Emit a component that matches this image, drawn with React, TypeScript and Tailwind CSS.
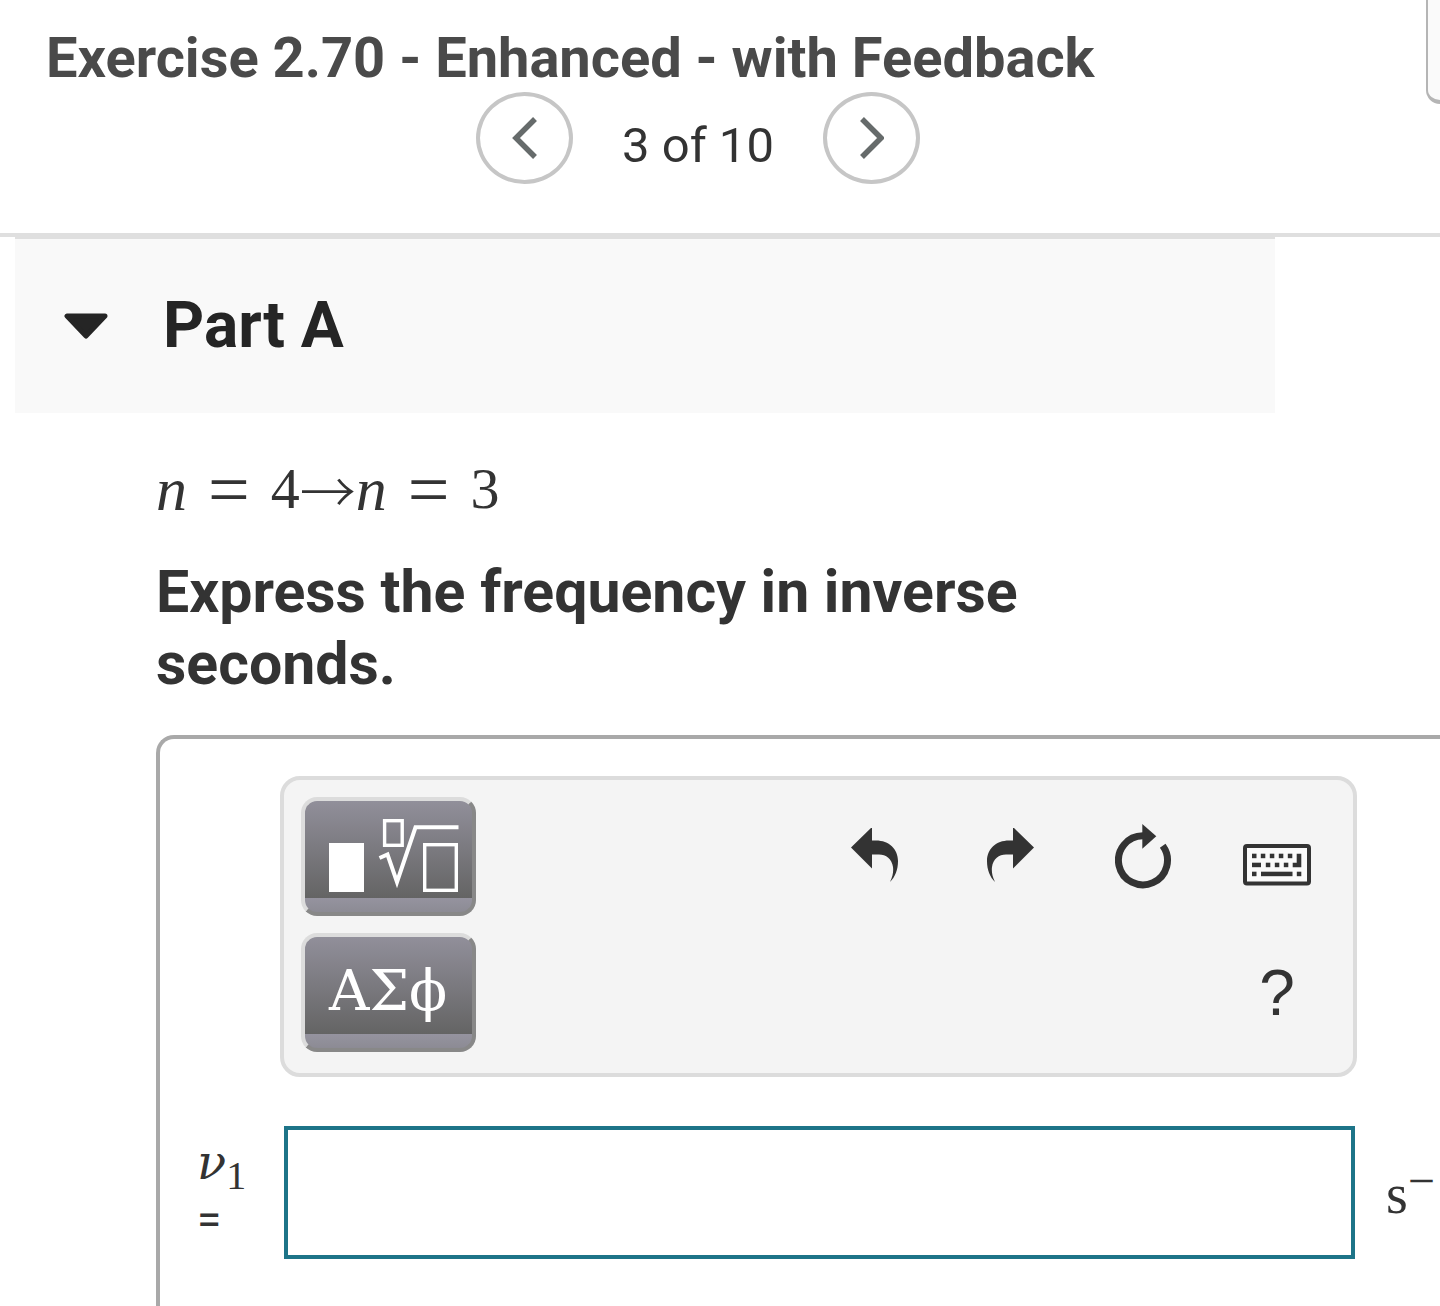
import React from "react";

const mathFont = "font-['Liberation_Serif',serif]";

function Chevron({ d }: { d: string }) {
  return (
    <svg width="26" height="42" viewBox="0 0 26 42" fill="none" stroke="#666b6b" strokeWidth="5.5" aria-hidden="true">
      <path d={d} />
    </svg>
  );
}

function NavButton({ label, d }: { label: string; d: string }) {
  return (
    <button aria-label={label} className="flex h-[92px] w-[97px] items-center justify-center rounded-[50%] border-4 border-[#c6c6c6] bg-white">
      <Chevron d={d} />
    </button>
  );
}

function CurvedArrow() {
  return (
    <svg width="49" height="57" viewBox="0 1 49 57" fill="#333" aria-hidden="true">
      <path d="M0 20.5 21 0V13.5H25C38 13.5 47 22 47 34C47 43 44 50 39 55C42 49 42.5 44 42 40C41 32 35 27.5 28 27.5H21V41.5Z" />
    </svg>
  );
}

function ResetIcon() {
  return (
    <svg width="57" height="65" viewBox="0 0 57 65" aria-hidden="true">
      <path d="M47.7 21.8A24.5 24.5 0 1 1 28 11.8" fill="none" stroke="#333" strokeWidth="7" />
      <path d="M27.3 0 41.3 12.3 27.3 24.7Z" fill="#333" />
    </svg>
  );
}

function KeyboardIcon() {
  return (
    <svg width="68" height="42" viewBox="0 0 68 42" fill="#333" aria-hidden="true">
      <rect x="2" y="2" width="64" height="37.5" rx="2" fill="#fafafa" stroke="#333" strokeWidth="4" />
      {[9, 17.8, 26.8, 35.8, 44.8].map((x) => (
        <rect key={x} x={x} y="9.7" width="4.5" height="4.5" />
      ))}
      <path d="M53.7 9.7H58.3V23.2H49.7V18.7H53.7Z" />
      <rect x="9" y="18.7" width="9" height="4.5" />
      {[22.8, 31.8, 40.8].map((x) => (
        <rect key={x} x={x} y="18.7" width="4.5" height="4.5" />
      ))}
      <rect x="9" y="27.7" width="4.5" height="4.5" />
      <rect x="18" y="27.7" width="31.5" height="4.5" />
      <rect x="53.8" y="27.7" width="4.5" height="4.5" />
    </svg>
  );
}

function TemplateIcon() {
  return (
    <svg width="130" height="75" viewBox="0 0 130 75" fill="none" stroke="#fff" strokeWidth="3.4" aria-hidden="true">
      <rect x="0" y="24" width="35" height="49" fill="#fff" stroke="none" />
      <rect x="55.6" y="1.7" width="17.6" height="24.6" />
      <path d="M50.5 39 58.5 35.5 68 63 86.5 8.3H129.5" strokeWidth="4" />
      <rect x="95.7" y="25.7" width="31.6" height="45.6" />
    </svg>
  );
}

function PaletteButton({ label, children }: { label: string; children: React.ReactNode }) {
  return (
    <button
      aria-label={label}
      className="flex h-[119px] w-[175px] items-center rounded-2xl border-4 border-t-[#dcdcdc] border-r-[#888] border-b-[#888] border-l-[#dcdcdc] bg-[linear-gradient(to_bottom,#918f9a_0px,#646464_97px,#95939f_97px,#8c8b94_111px)] pl-6 text-white"
    >
      {children}
    </button>
  );
}

function ToolButton({ label, children }: { label: string; children: React.ReactNode }) {
  return (
    <button aria-label={label} className="flex h-[119px] w-[134px] items-center justify-center">
      {children}
    </button>
  );
}

function Equals() {
  return <span className="mx-[21px] text-[74px]">=</span>;
}

export default function App() {
  return (
    <div className="flex min-h-screen flex-col overflow-hidden bg-white font-[Roboto,sans-serif] text-[#333]">
      <header className="flex h-[237px] items-start border-b-4 border-[#dfdfdf]">
        <div className="flex-1 pt-6">
          <h1 className="pl-[46px] text-[56px] leading-[68px] font-bold whitespace-nowrap text-[#4a4a4a]">
            Exercise 2.70 - Enhanced - with Feedback
          </h1>
          <nav aria-label="Items" className="flex items-start justify-center gap-[49px] pr-[30px]">
            <NavButton label="Previous" d="M23 2 4 21 23 40" />
            <span className="pt-[22px] text-[49px] leading-[64px]">3 of 10</span>
            <NavButton label="Next" d="M4 2 23 21 4 40" />
          </nav>
        </div>
        <button aria-label="Menu" className="h-[104px] w-[14px] rounded-bl-[16px] border-b-4 border-l-2 border-[#b5b5b5] bg-[#fafafa]" />
      </header>

      <main className="flex flex-1 flex-col">
        <section className="mr-[165px] ml-[15px] border-t-2 border-[#dfdfdf] bg-[#f9f9f9]">
          <h2>
            <button aria-expanded="true" className="flex h-[174px] w-full items-center gap-[55px] pl-[49px] text-[64px] leading-none font-bold text-[#252525]">
              <svg width="44" height="26" viewBox="0 0 44 26" aria-hidden="true">
                <path d="M3 3H41L22 23Z" fill="#252525" stroke="#252525" strokeWidth="5" strokeLinejoin="round" />
              </svg>
              Part A
            </button>
          </h2>
        </section>

        <div className="flex flex-1 flex-col pl-[156px]">
          <p className={`${mathFont} mt-10 flex items-center text-[58px] leading-[72px]`}>
            <i className="text-[62px]">n</i>
            <Equals />
            <span>4</span>
            <span className="font-['Noto_Sans_CJK_JP',sans-serif] text-[56px] font-light">→</span>
            <i className="text-[62px]">n</i>
            <Equals />
            <span>3</span>
          </p>
          <p className="mt-[31px] mr-[240px] text-[59px] leading-[72px] font-bold">Express the frequency in inverse seconds.</p>

          <form className="mt-[35px] grid flex-1 grid-cols-[83px_1fr_83px] grid-rows-[auto_auto] content-start gap-y-[49px] rounded-tl-[18px] border-t-4 border-l-4 border-[#a9a9a9] pt-[37px] pl-[37px]">
            <div className="col-start-2 flex flex-col gap-[17px] rounded-[20px] border-4 border-[#dcdcdc] bg-[#f4f4f4] pt-[17px] pr-[9px] pb-[21px] pl-[17px]">
              <div className="flex justify-between">
                <PaletteButton label="Templates">
                  <TemplateIcon />
                </PaletteButton>
                <div className="flex">
                  <ToolButton label="Undo">
                    <CurvedArrow />
                  </ToolButton>
                  <ToolButton label="Redo">
                    <span className="-scale-x-100">
                      <CurvedArrow />
                    </span>
                  </ToolButton>
                  <ToolButton label="Reset">
                    <ResetIcon />
                  </ToolButton>
                  <ToolButton label="Keyboard shortcuts">
                    <span className="pt-4">
                      <KeyboardIcon />
                    </span>
                  </ToolButton>
                </div>
              </div>
              <div className="flex justify-between">
                <PaletteButton label="Symbols">
                  <span className="pb-1 font-['DejaVu_Serif',serif] text-[56px] leading-none">ΑΣϕ</span>
                </PaletteButton>
                <ToolButton label="Help">
                  <span className="font-['Liberation_Sans',sans-serif] text-[64px] leading-none">?</span>
                </ToolButton>
              </div>
            </div>

            <label htmlFor="answer" className="col-start-1 flex flex-col pt-2">
              <span className={`${mathFont} text-[56px] leading-[52px]`}>
                <i className="font-['DejaVu_Serif',serif] text-[48px]">ν</i>
                <sub className="text-[40px]">1</sub>
              </span>
              <span className="pt-2 text-[44px] leading-[48px]">=</span>
            </label>
            <input id="answer" type="text" className="mr-[2px] ml-1 h-[133px] min-w-0 border-4 border-[#1d7488] bg-white px-4 text-[48px] outline-none" />
            <span className={`${mathFont} pt-8 pl-[29px] text-[56px] leading-[72px] whitespace-nowrap`}>
              s<sup className="-top-[16px] text-[48px]">−</sup>
            </span>
          </form>
        </div>
      </main>
    </div>
  );
}
